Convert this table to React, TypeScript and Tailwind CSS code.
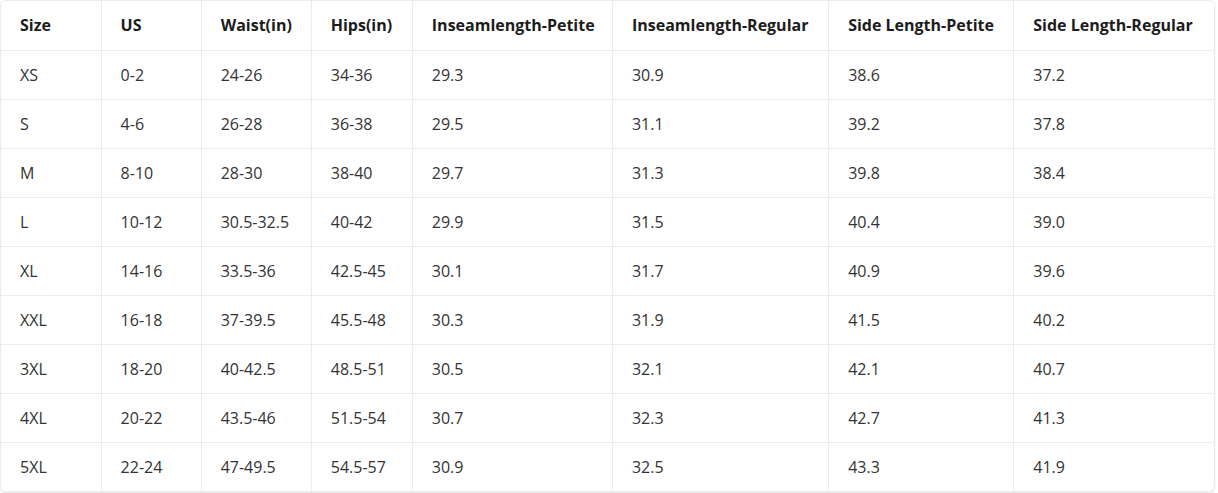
const headers = [
  "Size",
  "US",
  "Waist(in)",
  "Hips(in)",
  "Inseamlength-Petite",
  "Inseamlength-Regular",
  "Side Length-Petite",
  "Side Length-Regular",
]

const widths = ["w-[100px]", "w-[100px]", "w-[110px]", "w-[101px]", "w-[200px]", "w-[216px]", "w-[185px]", "w-[200px]"]

const rows = [
  ["XS", "0-2", "24-26", "34-36", "29.3", "30.9", "38.6", "37.2"],
  ["S", "4-6", "26-28", "36-38", "29.5", "31.1", "39.2", "37.8"],
  ["M", "8-10", "28-30", "38-40", "29.7", "31.3", "39.8", "38.4"],
  ["L", "10-12", "30.5-32.5", "40-42", "29.9", "31.5", "40.4", "39.0"],
  ["XL", "14-16", "33.5-36", "42.5-45", "30.1", "31.7", "40.9", "39.6"],
  ["XXL", "16-18", "37-39.5", "45.5-48", "30.3", "31.9", "41.5", "40.2"],
  ["3XL", "18-20", "40-42.5", "48.5-51", "30.5", "32.1", "42.1", "40.7"],
  ["4XL", "20-22", "43.5-46", "51.5-54", "30.7", "32.3", "42.7", "41.3"],
  ["5XL", "22-24", "47-49.5", "54.5-57", "30.9", "32.5", "43.3", "41.9"],
]

export default function App() {
  return (
    <div className="bg-white w-[1218px] h-[493px] font-['Open_Sans',sans-serif]">
      <div className="w-[1215px] rounded-md border border-[#ececec] shadow-[0_1px_2px_rgba(0,0,0,0.12)] overflow-hidden">
        <table className="table-fixed w-full border-collapse text-[16px]">
          <colgroup>
            {widths.map((w, i) => (
              <col key={i} className={w} />
            ))}
          </colgroup>
          <thead>
            <tr className="h-[49px] border-b border-[#ececec]">
              {headers.map((h, i) => (
                <th
                  key={h}
                  className={`text-left px-[19px] font-bold text-[#1c1c1c] whitespace-nowrap ${i > 0 ? "border-l border-[#ececec]" : ""}`}
                >
                  {h}
                </th>
              ))}
            </tr>
          </thead>
          <tbody>
            {rows.map((row, r) => (
              <tr key={r} className={`h-[49px] ${r < rows.length - 1 ? "border-b border-[#ececec]" : ""}`}>
                {row.map((cell, i) => (
                  <td
                    key={i}
                    className={`px-[19px] text-[#333333] whitespace-nowrap ${i > 0 ? "border-l border-[#ececec]" : ""}`}
                  >
                    {cell}
                  </td>
                ))}
              </tr>
            ))}
          </tbody>
        </table>
      </div>
    </div>
  )
}
